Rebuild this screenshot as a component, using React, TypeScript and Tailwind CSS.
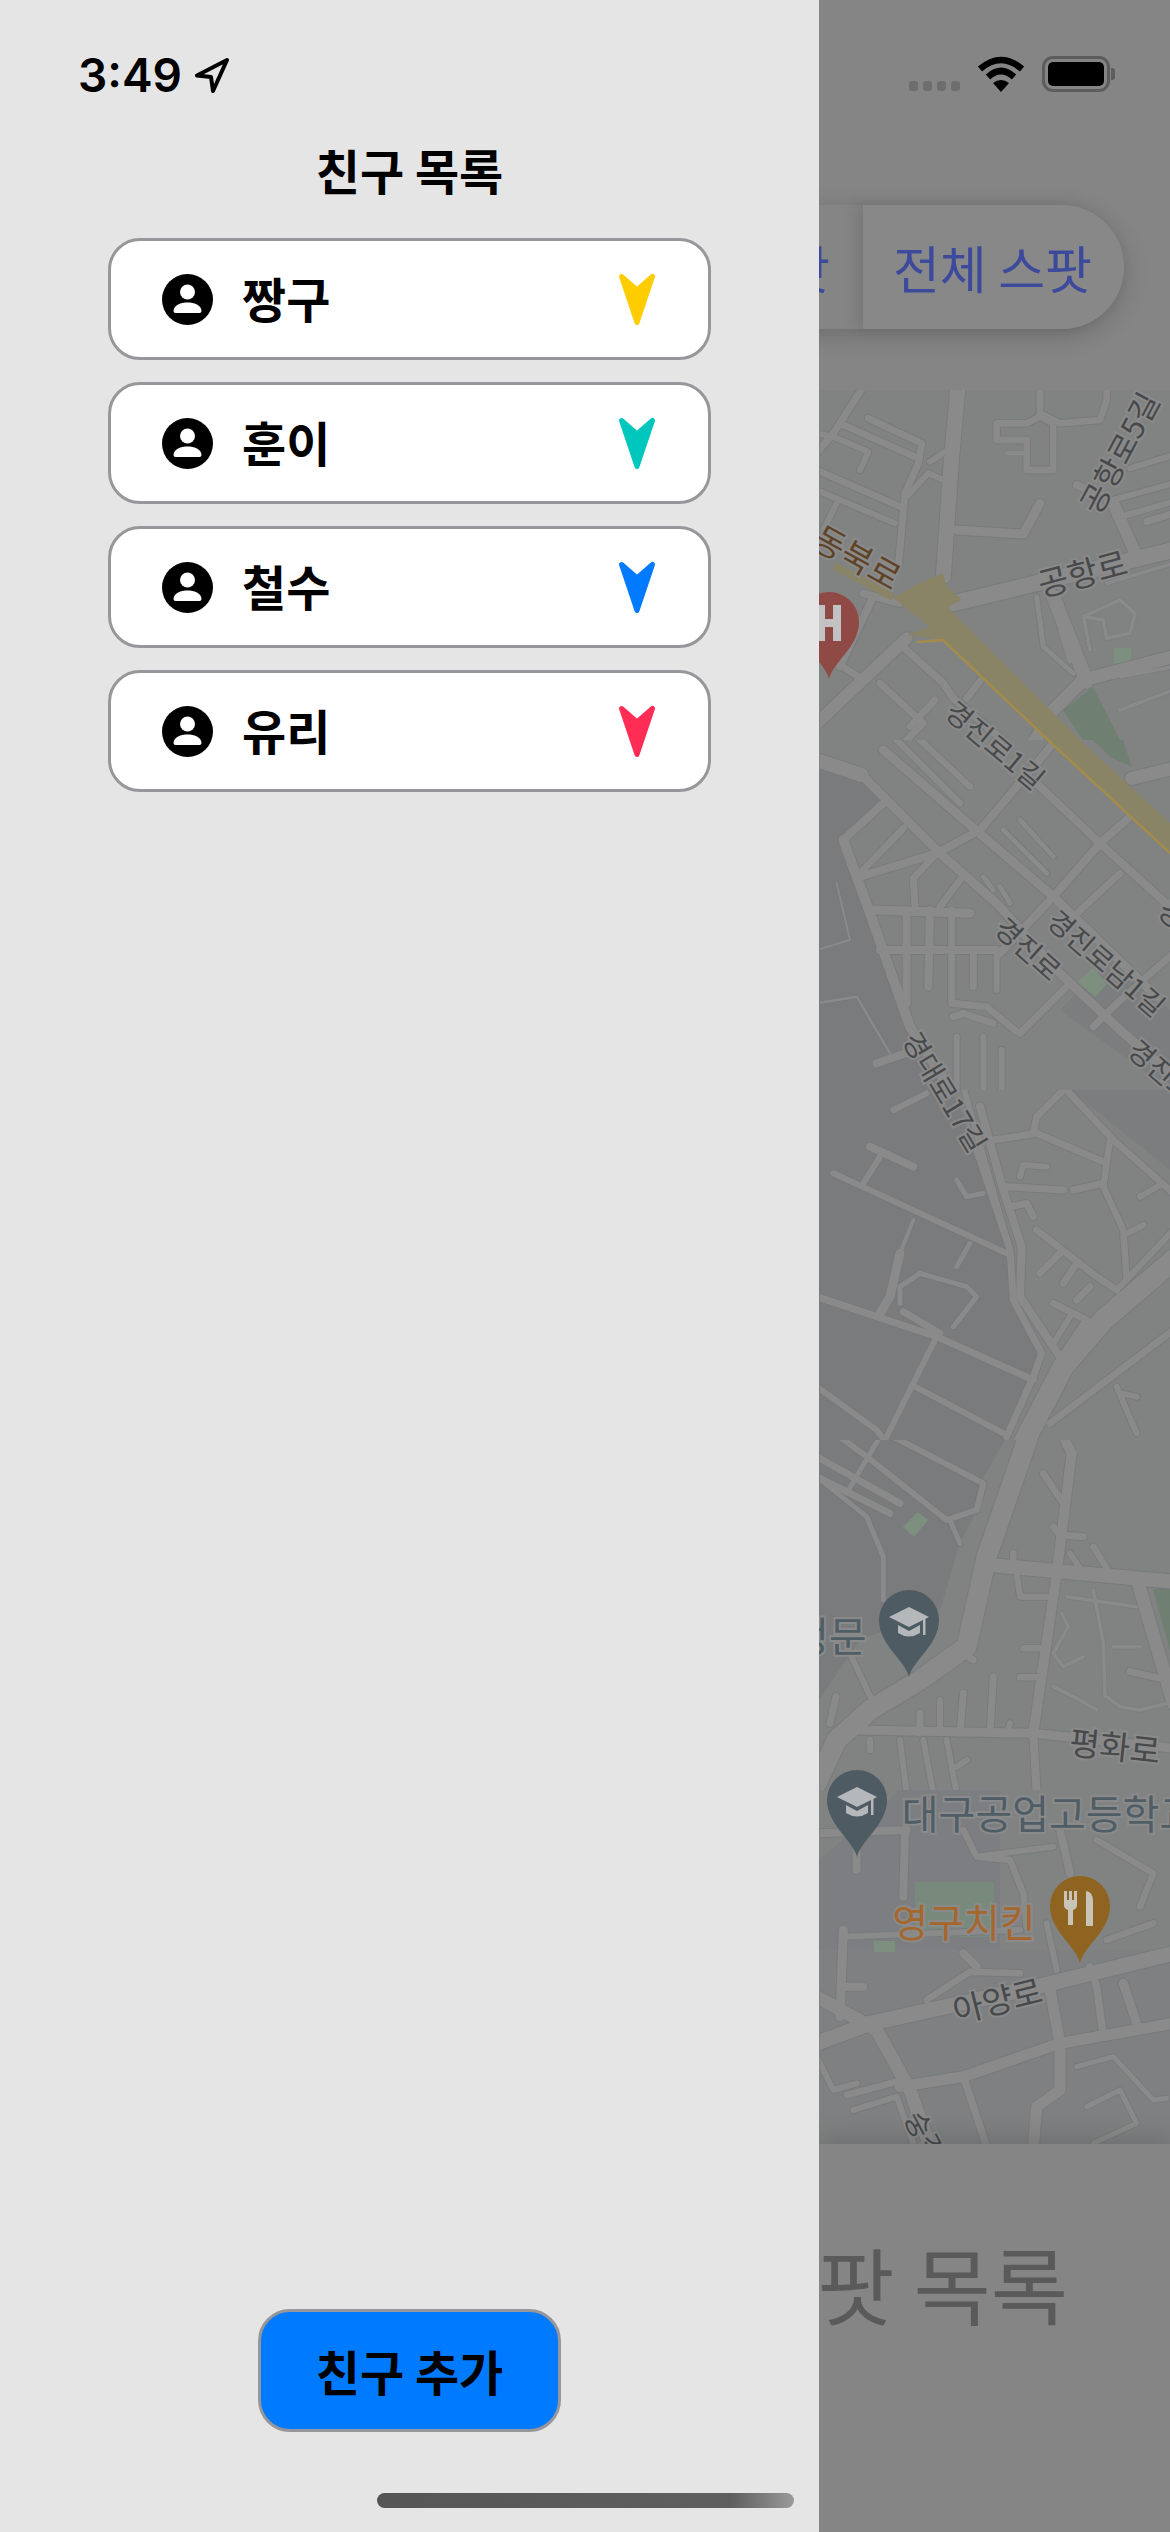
const friends = [
  { name: "짱구", color: "#ffcc00" },
  { name: "훈이", color: "#00c7be" },
  { name: "철수", color: "#007aff" },
  { name: "유리", color: "#ff2d55" },
];

type Road = [number, string];

// road lists, one per map tile, in 1050-unit tile coordinates
const tiles: { y: number; h: number; roads: Road[] }[] = [
  {
    y: 390,
    h: 1050,
    roads: [
      [30, "M415,-20 L395,200 L370,560"],
      [32, "M1060,480 L400,640"],
      [28, "M700,620 L800,875"],
      [24, "M880,340 L950,500"],
      [26, "M1060,800 L790,870 L700,960 L640,1060"],
      [24, "M-10,1000 L260,745"],
      [14, "M130,-10 L40,130 L-10,190"],
      [14, "M60,100 L295,205"],
      [12, "M-10,130 L40,140 L145,185 L120,240"],
      [14, "M-10,240 L240,350"],
      [12, "M-10,300 L225,400"],
      [14, "M145,85 L305,160 L295,220 L255,310 L235,530"],
      [12, "M330,215 L375,185"],
      [12, "M260,320 L325,250 L375,272"],
      [12, "M50,340 L10,420"],
      [13, "M530,100 L610,100 M530,100 L530,150 L620,150 L620,240 L700,240 L700,100 L660,80 L620,100"],
      [13, "M660,80 L660,-10"],
      [13, "M660,70 L720,100 L840,90 L860,30 L860,-10"],
      [8, "M560,190 L610,190"],
      [18, "M410,420 L610,432 L660,340"],
      [16, "M770,285 L840,315"],
      [12, "M860,335 L1060,280"],
      [12, "M930,235 L1060,195"],
      [12, "M920,375 L1060,335"],
      [14, "M980,395 L1060,370"],
      [15, "M160,620 L60,830"],
      [15, "M130,610 L240,640"],
      [14, "M-10,780 L130,870 L-10,1000"],
      [15, "M260,780 L370,880 L400,925 L560,1060"],
      [14, "M180,880 L310,1000 L250,1060"],
      [14, "M490,860 L440,925"],
      [14, "M345,930 L270,1010"],
      [10, "M650,620 L670,770 L760,850"],
      [8, "M720,720 L750,815"],
      [7, "M790,680 L900,630 L945,670 L930,730 L860,745 L850,690 L790,680 L810,780"],
      [7, "M860,580 L1060,520"],
      [7, "M900,860 L1060,830"],
      [7, "M900,960 L1060,900"],
    ],
  },
  {
    y: 740,
    h: 1050,
    roads: [
      [28, "M-10,60 L125,105"],
      [18, "M125,105 L360,340 L530,490 L720,700 L900,870 L1060,1010"],
      [18, "M190,30 L490,290 L700,470 L1010,770"],
      [16, "M650,130 L840,310 L1060,510"],
      [13, "M220,-10 L420,190"],
      [13, "M290,-10 L450,140"],
      [16, "M700,10 L480,270 L350,340 L120,410"],
      [16, "M930,230 L840,310 L700,470 L540,640"],
      [14, "M250,265 L120,400"],
      [14, "M420,420 L360,500"],
      [16, "M190,190 L70,300"],
      [14, "M350,340 L280,415 L285,500"],
      [14, "M900,400 L760,530"],
      [14, "M1060,640 L880,800 L820,860"],
      [14, "M740,740 L600,880"],
      [20, "M70,300 L150,520 L270,860 L400,1060"],
      [18, "M160,510 L450,520"],
      [16, "M180,630 L530,630"],
      [16, "M260,510 L260,790"],
      [16, "M330,510 L325,740"],
      [14, "M395,510 L395,790 L500,800 L590,875"],
      [14, "M460,640 L460,740"],
      [12, "M530,630 L530,750"],
      [14, "M400,830 L430,820 L520,850"],
      [12, "M410,890 L410,1060"],
      [12, "M490,890 L490,1060"],
      [12, "M545,930 L545,1060"],
      [10, "M600,240 L700,350"],
      [10, "M550,270 L680,400"],
      [10, "M490,410 L520,450"],
      [10, "M540,440 L570,490"],
      [16, "M170,970 L285,930"],
      [26, "M935,115 L1060,85"],
      [4, "M-10,630 L90,600 L50,430"],
      [5, "M-10,790 L110,770 L210,940"],
    ],
  },
  {
    y: 1090,
    h: 1050,
    roads: [
      [42, "M1060,510 L850,690 L730,830 L610,1060"],
      [12, "M430,-10 L570,480"],
      [14, "M470,180 L570,480 L580,630 L665,790 L640,860 L560,1040"],
      [16, "M480,50 L550,300 L605,470 L600,620 L720,800"],
      [14, "M-10,620 L350,740 L640,870"],
      [12, "M40,250 L560,490"],
      [12, "M130,280 L180,200"],
      [12, "M350,740 L190,1060"],
      [12, "M285,890 L560,1035"],
      [12, "M-10,890 L170,1020 L200,1060"],
      [14, "M250,665 L360,730"],
      [8, "M280,390 L240,490"],
      [10, "M450,460 L410,530"],
      [18, "M240,490 L210,620 L180,670"],
      [10, "M240,640 L240,590 L300,550 L440,590 L470,620 L400,710"],
      [16, "M150,170 L280,230"],
      [12, "M220,60 L320,10"],
      [10, "M410,270 L440,320 L490,310"],
      [14, "M520,150 L650,130 L850,215"],
      [14, "M740,-10 L650,80 L640,130"],
      [14, "M730,-10 L880,150 L1060,310"],
      [13, "M870,150 L850,290 L910,420 L920,570"],
      [14, "M560,290 L730,300"],
      [14, "M760,300 L850,280"],
      [12, "M920,430 L970,405"],
      [12, "M960,320 L1030,280"],
      [12, "M1060,420 L900,590"],
      [14, "M650,420 L830,560 L890,600"],
      [14, "M720,490 L660,550"],
      [14, "M770,520 L730,580"],
      [14, "M810,590 L770,630"],
      [14, "M700,640 L800,690"],
      [12, "M750,680 L700,760"],
      [12, "M790,700 L730,790"],
      [14, "M570,350 L620,340 L640,380"],
      [14, "M1060,720 L690,1000"],
      [12, "M890,890 L950,1030"],
      [12, "M900,910 L950,920"],
      [12, "M600,260 L610,225 L680,230"],
    ],
  },
  {
    y: 1440,
    h: 1050,
    roads: [
      [40, "M625,-10 L500,350 L440,620 L300,720 L150,810 L50,900 L-10,1030"],
      [28, "M510,375 L1060,425"],
      [26, "M955,430 L1060,790"],
      [20, "M730,-10 L755,40 L710,400 L640,880"],
      [12, "M220,-10 L490,130 L470,210 L380,240 L140,50 L-10,-60"],
      [10, "M180,-10 L80,160"],
      [14, "M-10,50 L240,190"],
      [14, "M-10,110 L210,220"],
      [10, "M-10,110 L140,230 L190,350 L190,480"],
      [10, "M390,240 L420,310"],
      [14, "M670,100 L730,190"],
      [14, "M700,260 L720,285 L790,290"],
      [13, "M820,320 L870,400"],
      [12, "M750,340 L790,400"],
      [13, "M580,340 L580,370"],
      [12, "M590,400 L600,470 L680,470"],
      [13, "M610,625 L660,625"],
      [13, "M600,712 L650,712"],
      [14, "M430,640 L460,660"],
      [18, "M110,870 L640,880 L1060,925"],
      [14, "M520,710 L510,880"],
      [14, "M430,760 L420,880"],
      [12, "M360,780 L360,870"],
      [14, "M300,820 L300,880"],
      [14, "M48,770 L30,850"],
      [12, "M570,850 L560,880"],
      [12, "M90,640 L160,790"],
      [12, "M240,900 L260,1060"],
      [12, "M310,900 L340,1060"],
      [12, "M380,900 L410,1060"],
      [12, "M410,980 L440,960"],
      [16, "M640,880 L650,1060"],
      [13, "M150,900 L150,930"],
      [7, "M725,520 L745,560 L700,640 L730,680 L790,650"],
      [7, "M820,450 L850,610 L855,770"],
      [7, "M740,470 L950,500"],
      [7, "M880,620 L960,620"],
      [14, "M930,695 L1020,715"],
      [7, "M700,740 L780,780 L830,810"],
      [7, "M860,770 L900,800 L960,810 L1040,790"],
    ],
  },
  {
    y: 1790,
    h: 1062,
    roads: [
      [30, "M-10,760 L150,700 L650,590 L1060,490"],
      [26, "M-10,620 L170,720 L270,900 L330,1070"],
      [22, "M690,600 L720,760 L720,900 L650,950 L640,1070"],
      [15, "M810,530 L830,590 L850,740"],
      [18, "M910,580 L950,700"],
      [22, "M1060,700 L720,760 L430,860 L240,890"],
      [15, "M430,860 L500,1070"],
      [16, "M-10,130 L260,120"],
      [16, "M255,120 L250,320"],
      [18, "M70,420 L60,680"],
      [12, "M70,440 L600,420"],
      [16, "M110,180 L110,240"],
      [16, "M70,590 L130,590"],
      [16, "M430,490 L470,530"],
      [13, "M320,630 L450,545 L600,550"],
      [13, "M430,120 L470,200 L570,210 L610,310 L620,410"],
      [12, "M470,200 L700,170"],
      [16, "M720,120 L750,250"],
      [13, "M830,150 L1000,250 L960,350"],
      [13, "M860,450 L1000,400"],
      [12, "M680,400 L710,540"],
      [12, "M-10,800 L40,900 L110,880"],
      [13, "M80,915 L230,875"],
      [10, "M770,830 L880,800 L1000,930 L1040,925"],
      [10, "M800,950 L900,900 L950,1000 L820,1060"],
      [12, "M100,960 L230,920 L280,1060"],
    ],
  },
];

const labels = [
  { t: "공항로5길", x: 1118, y: 452, r: -62, s: 31, c: "#47494b" },
  { t: "동북로", x: 858, y: 556, r: 29, s: 34, c: "#5f4326" },
  { t: "공항로", x: 1082, y: 572, r: -15, s: 33, c: "#47494b" },
  { t: "경진로1길", x: 996, y: 744, r: 40, s: 28, c: "#47494b" },
  { t: "경진로", x: 1029, y: 948, r: 42, s: 28, c: "#47494b" },
  { t: "경진로남1길", x: 1107, y: 962, r: 41, s: 28, c: "#47494b" },
  { t: "경진로남", x: 1172, y: 1078, r: 41, s: 28, c: "#47494b" },
  { t: "경진로", x: 1192, y: 930, r: 42, s: 28, c: "#47494b" },
  { t: "경대로17길", x: 946, y: 1091, r: 59, s: 28, c: "#47494b" },
  { t: "평화로", x: 1115, y: 1745, r: 6, s: 33, c: "#47494b" },
  { t: "정문", x: 829, y: 1634, r: 0, s: 41, c: "#4f5d66" },
  { t: "대구공업고등학교", x: 1049, y: 1812, r: 0, s: 40, c: "#4f5d66" },
  { t: "영구치킨", x: 964, y: 1920, r: 0, s: 39, c: "#a5672c" },
  { t: "아양로", x: 997, y: 1999, r: -14, s: 33, c: "#47494b" },
  { t: "숭길", x: 926, y: 2135, r: 62, s: 28, c: "#47494b" },
];

const PIN = "M0,57 C-4,40 -30,25 -30,0 A30,30 0 1 1 30,0 C30,25 4,40 0,57 Z";

function CapPin({ x, y }: { x: number; y: number }) {
  return (
    <g transform={`translate(${x} ${y})`}>
      <path d={PIN} fill="#4e5b63" />
      <path d="M-20,-3 L0,-13 L20,-3 L0,7 Z" fill="#b4b8bb" />
      <path d="M-11,5 L0,11 L11,5 L11,13 Q0,20 -11,13 Z" fill="#b4b8bb" />
      <rect x="14" y="-2" width="2.5" height="17" fill="#b4b8bb" />
    </g>
  );
}

function MapView() {
  return (
    <svg viewBox="819 390 351 1754" className="block h-[1754px] w-[351px] bg-[#818383]">
      {/* darker campus area */}
      <path
        d="M819,770 L860,775 L885,800 L843,840 L870,913 L910,1027 L953,1090 L977,1150 L1010,1250 L1013,1300 L1042,1353 L1033,1377 L1007,1437 L980,1483 L977,1510 L960,1543 L940,1610 L860,1640 L819,1700 Z"
        fill="#7a7b7d"
      />
      <path d="M1060,1010 L1110,960 L1170,1010 L1170,1090 Z" fill="#7c7d7f" />
      <path d="M1070,1090 L1170,1090 L1170,1170 Z" fill="#7c7d7f" />
      <path d="M900,1790 L1000,1790 L1000,1950 L819,1950 L819,1860 Z" fill="#7d7e81" />
      <path d="M820,1950 L1170,1950 L1170,2144 L820,2144 Z" fill="#7e7f80" opacity="0.6" />

      {/* parks */}
      <path d="M1063,710 L1093,687 L1120,740 L1083,740 Z" fill="#6f8073" />
      <path d="M1093,740 L1123,740 L1132,767 L1110,757 Z" fill="#6f8073" />
      <rect x="1114" y="648" width="17" height="15" fill="#7d9080" />
      <path d="M1078,982 L1093,968 L1107,984 L1095,997 Z" fill="#7d9080" />
      <path d="M903,1527 L918,1512 L928,1520 L914,1537 Z" fill="#7d9080" />
      <path d="M1153,1590 L1170,1583 L1170,1650 Z" fill="#6f8073" />
      <rect x="915" y="1882" width="79" height="55" fill="#788a7c" />
      <rect x="874" y="1941" width="21" height="11" fill="#7d9080" />

      {tiles.map((tile) => (
        <svg key={tile.y} x="820" y={tile.y} width="350" height={tile.h / 3} viewBox={`0 0 1050 ${tile.h}`}>
          <g fill="none" strokeLinecap="round" strokeLinejoin="round">
            {tile.roads.map(([w, d], i) => (
              <path key={i} d={d} stroke="#76787a" strokeWidth={w * 1.5 + 6} opacity={w < 9 ? 0.4 : 0.8} />
            ))}
            {tile.roads.map(([w, d], i) => (
              <path key={i} d={d} stroke="#8a8a8a" strokeWidth={w * 1.5} />
            ))}
          </g>
        </svg>
      ))}

      {/* highway */}
      <path d="M834,566 L893,597" fill="none" stroke="#8a8467" strokeWidth="8" />
      <path
        d="M893,598 L920,583 L943,573 L947,587 L962,600 L948,607 L967,627 L1080,740 L1170,823 L1170,853 L1048,740 L943,640 L907,635 L930,627 Z"
        fill="#8a8467"
      />
      <path d="M917,642 L943,640 L1048,740 L1170,853" fill="none" stroke="#a38b4c" strokeWidth="2.5" />

      {/* pins */}
      <g transform="translate(829 622)">
        <path d={PIN} fill="#8f4a46" />
        <rect x="-12" y="-17" width="8" height="36" fill="#c2c2c2" />
        <rect x="4" y="-17" width="8" height="36" fill="#c2c2c2" />
        <rect x="-12" y="-3" width="24" height="8" fill="#c2c2c2" />
      </g>
      <CapPin x={909} y={1620} />
      <CapPin x={857} y={1800} />
      <g transform="translate(1080 1906)">
        <path d={PIN} fill="#8f6420" />
        <path
          d="M-16,-15 h3 v9 h2 v-9 h3 v9 h2 v-9 h3 v14 q0,4 -4,5 v15 h-5 v-15 q-4,-1 -4,-5 z"
          fill="#c9c4b8"
        />
        <path d="M6,-15 q7,1 7,10 v25 h-7 z" fill="#c9c4b8" />
      </g>

      <g fontFamily="'Noto Sans CJK KR', sans-serif" textAnchor="middle" dominantBaseline="central">
        {labels.map((l) => (
          <text
            key={l.t + l.x}
            transform={`translate(${l.x} ${l.y}) rotate(${l.r})`}
            fontSize={l.s}
            fill={l.c}
            stroke="#8a8a8a"
            strokeWidth="4"
            paintOrder="stroke"
          >
            {l.t}
          </text>
        ))}
      </g>
    </svg>
  );
}

function PersonIcon() {
  return (
    <svg width="51" height="51" viewBox="0 0 51 51" className="shrink-0">
      <circle cx="25.5" cy="25.5" r="25.5" fill="#000" />
      <circle cx="25.5" cy="18" r="7.5" fill="#fff" />
      <path d="M11.5,37 C11.5,31 19,28.5 25.5,28.5 C32,28.5 39.5,31 39.5,37 Q39.5,39 37.5,39 L13.5,39 Q11.5,39 11.5,37 Z" fill="#fff" />
    </svg>
  );
}

function Marker({ color }: { color: string }) {
  return (
    <svg width="40" height="52" viewBox="0 0 40 52" className="shrink-0">
      <polygon
        points="4.5,3.5 20,17 35.5,3.5 20,49.5"
        fill={color}
        stroke={color}
        strokeWidth="5"
        strokeLinejoin="round"
      />
    </svg>
  );
}

export default function App() {
  return (
    <div className="relative flex h-[2532px] w-[1170px] overflow-hidden bg-[#858585] font-['Noto_Sans_CJK_KR',sans-serif]">
      <aside className="relative z-10 flex w-[819px] shrink-0 flex-col items-center bg-[#e5e5e5] pb-[100px]">
        <div className="h-[57px] w-full"></div>
        <div className="flex w-full items-center gap-[12px] pl-[78px]">
          <span className="font-['Inter',sans-serif] text-[46px] leading-[36px] font-semibold text-black">3:49</span>
          <svg width="36" height="36" viewBox="0 0 36 36">
            <path d="M33,3 L3,18.5 L17,20 L19,34 Z" fill="none" stroke="#000" strokeWidth="4" strokeLinejoin="round" />
          </svg>
        </div>
        <h1 className="mt-[48px] text-[48px] leading-[56px] font-bold text-black">친구 목록</h1>
        <ul className="mt-[41px] flex flex-col gap-[22px]">
          {friends.map((f) => (
            <li
              key={f.name}
              className="flex h-[122px] w-[603px] items-center rounded-[32px] border-[3px] border-[#97979b] bg-white pr-[51px] pl-[51px]"
            >
              <PersonIcon />
              <span className="mb-[5px] ml-[29px] flex-1 text-[48px] leading-[56px] font-bold text-black">{f.name}</span>
              <Marker color={f.color} />
            </li>
          ))}
        </ul>
        <button className="mt-auto h-[123px] w-[303px] rounded-[32px] border-[3px] border-[#97979b] bg-[#007aff] pb-[2px] text-[48px] leading-[56px] font-bold text-black">
          친구 추가
        </button>
      </aside>

      <main className="flex min-w-0 flex-1 flex-col">
        <div className="h-[390px] overflow-hidden">
          <div className="flex h-[92px] items-end justify-end gap-[17px] pr-[55px]">
            <div className="mb-[1px] flex gap-[5px]">
              <span className="h-[10px] w-[9px] rounded-[3px] bg-[#6e6e6e]"></span>
              <span className="h-[10px] w-[9px] rounded-[3px] bg-[#6e6e6e]"></span>
              <span className="h-[10px] w-[9px] rounded-[3px] bg-[#6e6e6e]"></span>
              <span className="h-[10px] w-[9px] rounded-[3px] bg-[#6e6e6e]"></span>
            </div>
            <svg width="48" height="36" viewBox="0 0 48 36">
              <path d="M3,13 Q24,-5 45,13" fill="none" stroke="#000" strokeWidth="6.5" />
              <path d="M11,21 Q24,9 37,21" fill="none" stroke="#000" strokeWidth="6.5" />
              <path d="M16,27 Q24,21 32,27 L24,36 Z" fill="#000" />
            </svg>
            <div className="flex items-center gap-[1px]">
              <div className="h-[36px] w-[68px] rounded-[11px] border-[3px] border-[#5c5c5c] p-[3px]">
                <div className="h-full w-full rounded-[5px] bg-black"></div>
              </div>
              <div className="h-[12px] w-[4px] rounded-r-[3px] bg-[#5c5c5c]"></div>
            </div>
          </div>
          <div className="mt-[113px] flex justify-end pr-[46px]">
            <div className="flex h-[124px] shrink-0 items-center rounded-r-[62px] shadow-[0_6px_24px_rgba(0,0,0,0.18)]">
              <div className="shrink-0 bg-[#858585] py-[30px] pr-[32px] pl-[40px] text-[51px] leading-[64px] whitespace-nowrap text-[#3d4a9c]">
                내 스팟
              </div>
              <div className="h-[124px] shrink-0 rounded-r-[62px] border-l border-[#7a7a7a] bg-[#888888] pt-[30px] pr-[32px] pl-[30px] text-[51px] leading-[64px] whitespace-nowrap text-[#3d4a9c] shadow-[-6px_0_14px_rgba(0,0,0,0.1)]">
                전체 스팟
              </div>
            </div>
          </div>
        </div>
        <MapView />
        <div className="relative flex flex-1 justify-end overflow-hidden bg-[#858585] pt-[91px] pr-[102px] shadow-[0_-6px_24px_rgba(0,0,0,0.15)]">
          <span className="text-[84px] leading-[96px] whitespace-nowrap text-[#5a5a5a]">스팟 목록</span>
        </div>
      </main>

      <div className="absolute top-[2493px] left-[377px] z-20 h-[15px] w-[417px] rounded-[8px] bg-gradient-to-r from-[#555555] via-[#5f5f5f] via-85% to-[#9a9a9a]"></div>
    </div>
  );
}
